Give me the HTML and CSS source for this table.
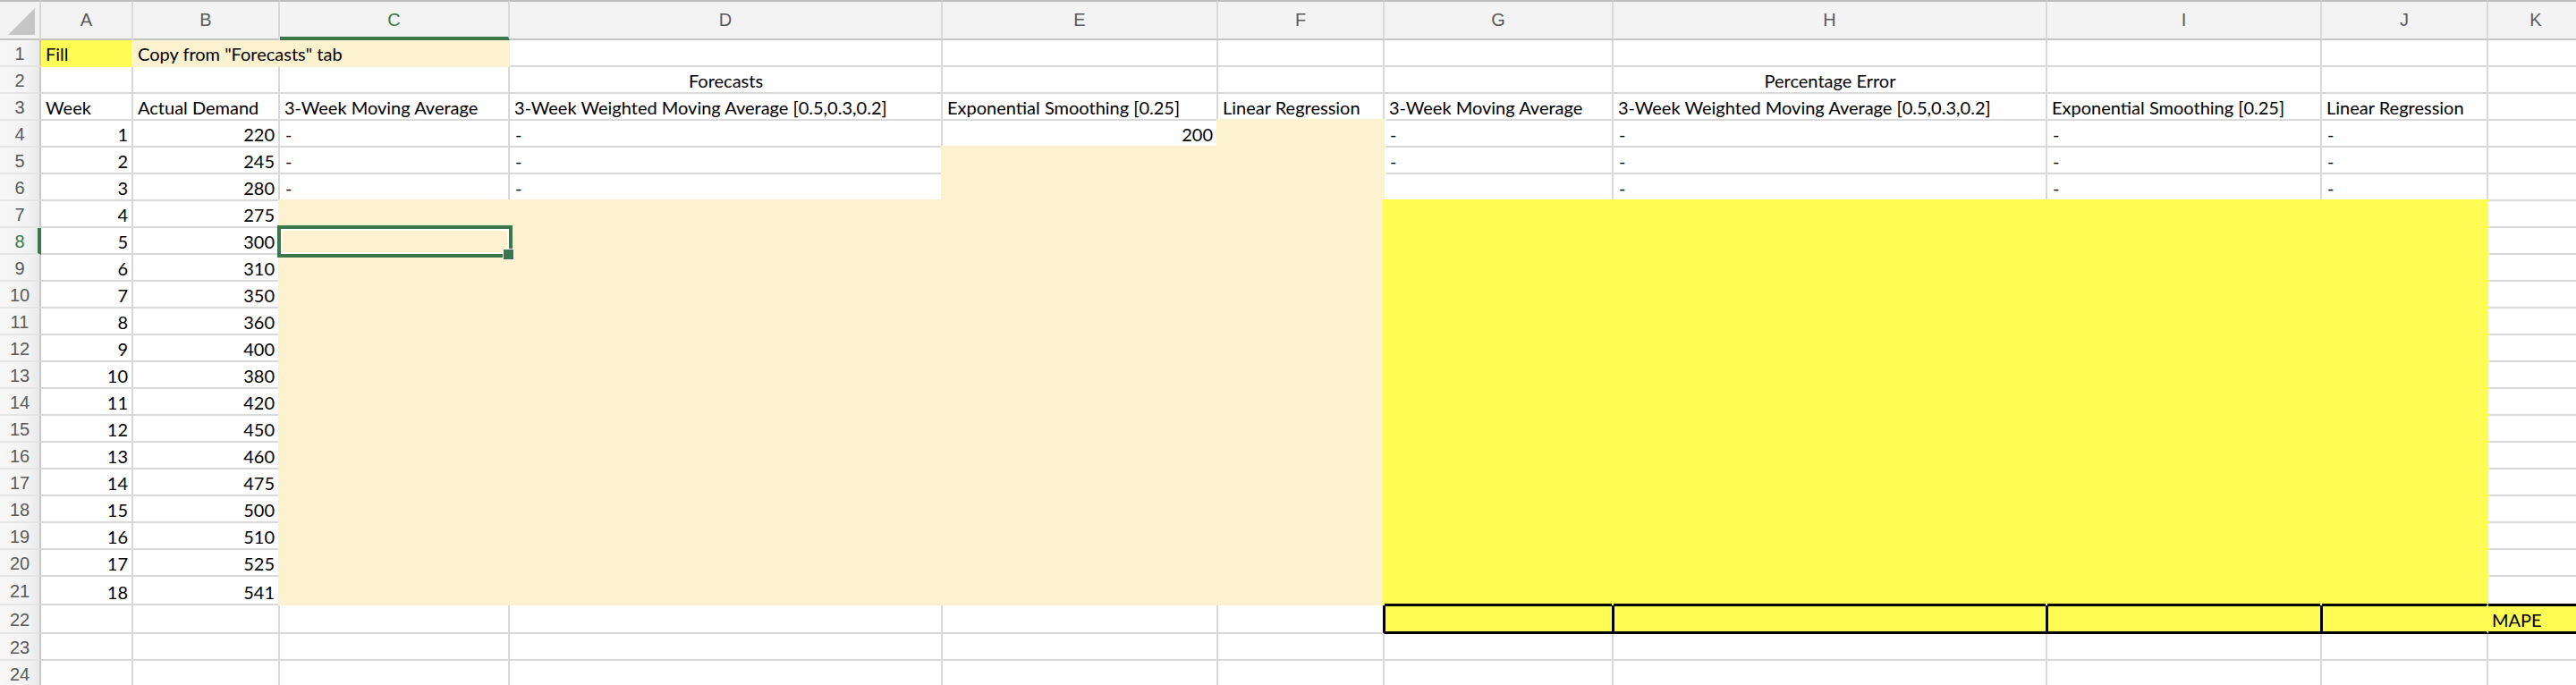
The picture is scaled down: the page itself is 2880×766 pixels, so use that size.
FILE: index.html
```html
<!DOCTYPE html>
<html>
<head>
<meta charset="utf-8">
<link rel="stylesheet" href="styles.css">
</head>
<body>
<div class="sheet">
  <div class="corner"><div class="tri"></div></div>
  <div class="colheads">
    <div class="ch">A</div><div class="ch">B</div><div class="ch sel">C</div><div class="ch">D</div><div class="ch">E</div><div class="ch">F</div><div class="ch">G</div><div class="ch">H</div><div class="ch">I</div><div class="ch">J</div><div class="ch">K</div>
  </div>
  <div class="rowheads">
    <div class="rh">1</div><div class="rh">2</div><div class="rh">3</div><div class="rh">4</div><div class="rh">5</div><div class="rh">6</div><div class="rh">7</div><div class="rh sel">8</div><div class="rh">9</div><div class="rh">10</div><div class="rh">11</div><div class="rh">12</div><div class="rh">13</div><div class="rh">14</div><div class="rh">15</div><div class="rh">16</div><div class="rh">17</div><div class="rh">18</div><div class="rh">19</div><div class="rh">20</div><div class="rh">21</div><div class="rh">22</div><div class="rh">23</div><div class="rh">24</div>
  </div>
  <div class="cells">
    <!-- row 1 -->
    <div class="c y">Fill</div><div class="c cr span2">Copy from "Forecasts" tab</div><div class="c"></div><div class="c"></div><div class="c"></div><div class="c"></div><div class="c"></div><div class="c"></div><div class="c"></div><div class="c"></div>
    <!-- row 2 -->
    <div class="c"></div><div class="c"></div><div class="c"></div><div class="c ctr">Forecasts</div><div class="c"></div><div class="c"></div><div class="c"></div><div class="c ctr">Percentage Error</div><div class="c"></div><div class="c"></div><div class="c"></div>
    <!-- row 3 -->
    <div class="c">Week</div><div class="c">Actual Demand</div><div class="c">3-Week Moving Average</div><div class="c">3-Week Weighted Moving Average [0.5,0.3,0.2]</div><div class="c">Exponential Smoothing [0.25]</div><div class="c">Linear Regression</div><div class="c">3-Week Moving Average</div><div class="c">3-Week Weighted Moving Average [0.5,0.3,0.2]</div><div class="c">Exponential Smoothing [0.25]</div><div class="c">Linear Regression</div><div class="c"></div>
    <!-- row 4 -->
    <div class="c r">1</div><div class="c r">220</div><div class="c dash">-</div><div class="c dash">-</div><div class="c r">200</div><div class="c cr"></div><div class="c dash">-</div><div class="c dash">-</div><div class="c dash">-</div><div class="c dash">-</div><div class="c"></div>
    <!-- row 5 -->
    <div class="c r">2</div><div class="c r">245</div><div class="c dash">-</div><div class="c dash">-</div><div class="c cr"></div><div class="c cr"></div><div class="c dash">-</div><div class="c dash">-</div><div class="c dash">-</div><div class="c dash">-</div><div class="c"></div>
    <!-- row 6 -->
    <div class="c r">3</div><div class="c r">280</div><div class="c dash">-</div><div class="c dash">-</div><div class="c cr"></div><div class="c cr"></div><div class="c"></div><div class="c dash">-</div><div class="c dash">-</div><div class="c dash">-</div><div class="c"></div>
    <!-- rows 7-20 -->
    <div class="c r">4</div><div class="c r">275</div><div class="c cr"></div><div class="c cr"></div><div class="c cr"></div><div class="c cr"></div><div class="c y"></div><div class="c y"></div><div class="c y"></div><div class="c y"></div><div class="c"></div>
    <div class="c r">5</div><div class="c r">300</div><div class="c cr"></div><div class="c cr"></div><div class="c cr"></div><div class="c cr"></div><div class="c y"></div><div class="c y"></div><div class="c y"></div><div class="c y"></div><div class="c"></div>
    <div class="c r">6</div><div class="c r">310</div><div class="c cr"></div><div class="c cr"></div><div class="c cr"></div><div class="c cr"></div><div class="c y"></div><div class="c y"></div><div class="c y"></div><div class="c y"></div><div class="c"></div>
    <div class="c r">7</div><div class="c r">350</div><div class="c cr"></div><div class="c cr"></div><div class="c cr"></div><div class="c cr"></div><div class="c y"></div><div class="c y"></div><div class="c y"></div><div class="c y"></div><div class="c"></div>
    <div class="c r">8</div><div class="c r">360</div><div class="c cr"></div><div class="c cr"></div><div class="c cr"></div><div class="c cr"></div><div class="c y"></div><div class="c y"></div><div class="c y"></div><div class="c y"></div><div class="c"></div>
    <div class="c r">9</div><div class="c r">400</div><div class="c cr"></div><div class="c cr"></div><div class="c cr"></div><div class="c cr"></div><div class="c y"></div><div class="c y"></div><div class="c y"></div><div class="c y"></div><div class="c"></div>
    <div class="c r">10</div><div class="c r">380</div><div class="c cr"></div><div class="c cr"></div><div class="c cr"></div><div class="c cr"></div><div class="c y"></div><div class="c y"></div><div class="c y"></div><div class="c y"></div><div class="c"></div>
    <div class="c r">11</div><div class="c r">420</div><div class="c cr"></div><div class="c cr"></div><div class="c cr"></div><div class="c cr"></div><div class="c y"></div><div class="c y"></div><div class="c y"></div><div class="c y"></div><div class="c"></div>
    <div class="c r">12</div><div class="c r">450</div><div class="c cr"></div><div class="c cr"></div><div class="c cr"></div><div class="c cr"></div><div class="c y"></div><div class="c y"></div><div class="c y"></div><div class="c y"></div><div class="c"></div>
    <div class="c r">13</div><div class="c r">460</div><div class="c cr"></div><div class="c cr"></div><div class="c cr"></div><div class="c cr"></div><div class="c y"></div><div class="c y"></div><div class="c y"></div><div class="c y"></div><div class="c"></div>
    <div class="c r">14</div><div class="c r">475</div><div class="c cr"></div><div class="c cr"></div><div class="c cr"></div><div class="c cr"></div><div class="c y"></div><div class="c y"></div><div class="c y"></div><div class="c y"></div><div class="c"></div>
    <div class="c r">15</div><div class="c r">500</div><div class="c cr"></div><div class="c cr"></div><div class="c cr"></div><div class="c cr"></div><div class="c y"></div><div class="c y"></div><div class="c y"></div><div class="c y"></div><div class="c"></div>
    <div class="c r">16</div><div class="c r">510</div><div class="c cr"></div><div class="c cr"></div><div class="c cr"></div><div class="c cr"></div><div class="c y"></div><div class="c y"></div><div class="c y"></div><div class="c y"></div><div class="c"></div>
    <div class="c r">17</div><div class="c r">525</div><div class="c cr"></div><div class="c cr"></div><div class="c cr"></div><div class="c cr"></div><div class="c y"></div><div class="c y"></div><div class="c y"></div><div class="c y"></div><div class="c"></div>
    <!-- row 21 -->
    <div class="c r">18</div><div class="c r">541</div><div class="c cr"></div><div class="c cr"></div><div class="c cr"></div><div class="c cr"></div><div class="c y above"></div><div class="c y above"></div><div class="c y above"></div><div class="c y above"></div><div class="c above"></div>
    <!-- row 22 -->
    <div class="c"></div><div class="c"></div><div class="c"></div><div class="c"></div><div class="c"></div><div class="c boxl"></div><div class="c yb box sep"></div><div class="c yb box sep"></div><div class="c yb box sep"></div><div class="c yb box"></div><div class="c yb boxk">MAPE</div>
    <!-- row 23 -->
    <div class="c"></div><div class="c"></div><div class="c"></div><div class="c"></div><div class="c"></div><div class="c"></div><div class="c"></div><div class="c"></div><div class="c"></div><div class="c"></div><div class="c"></div>
    <!-- row 24 -->
    <div class="c"></div><div class="c"></div><div class="c"></div><div class="c"></div><div class="c"></div><div class="c"></div><div class="c"></div><div class="c"></div><div class="c"></div><div class="c"></div><div class="c"></div>

    <div class="selection"><div class="handle"></div></div>
  </div>
</div>
</body>
</html>
```
FILE: styles.css
```css
* { box-sizing: border-box; }
html, body { margin: 0; padding: 0; background: #fff; }
body { width: 2880px; height: 766px; overflow: hidden; }

.sheet {
  display: grid;
  grid-template-columns: 46px 2834px;
  grid-template-rows: 45px auto;
}

.corner {
  background: #f3f3f3;
  border-top: 2px solid #bdbdbd;
  border-right: 2px solid #d6d6d6;
  border-bottom: 2px solid #c4c4c4;
  overflow: hidden;
  padding: 7px 0 0 9px;
}
.tri {
  width: 0;
  height: 0;
  border-left: 30px solid transparent;
  border-bottom: 30px solid #c6c6c6;
}

.colheads {
  display: grid;
  grid-template-columns: 103px 164px 257px 484px 308px 186px 256px 485px 307px 186px 106px;
  overflow: hidden;
}
.ch {
  background: #f3f3f3;
  border-top: 2px solid #bdbdbd;
  border-right: 2px solid #dadada;
  border-bottom: 2px solid #c4c4c4;
  display: flex;
  align-items: center;
  justify-content: center;
  font-family: "Liberation Sans", Arial, sans-serif;
  font-size: 20px;
  color: #5a5a5a;
  padding-bottom: 1px;
}
.ch:last-child { border-right: 0; }
.ch.sel {
  color: #3a774a;
  border-bottom: 4px solid #3a774a;
  padding-top: 2px;
}

.rowheads {
  display: grid;
  grid-template-rows: repeat(20, 30px) 32px 32px 30px 30px;
}
.rh {
  background: linear-gradient(to right, #f7f7f7 0%, #f3f3f3 70%, #e9e9e9 100%);
  border-right: 2px solid #c8c8c8;
  border-bottom: 2px solid #e4e4e4;
  display: flex;
  align-items: center;
  justify-content: center;
  font-family: "Liberation Sans", Arial, sans-serif;
  font-size: 20px;
  color: #5a5a5a;
  padding-top: 3px;
}
.rh.sel {
  color: #3a774a;
  border-right: 4px solid #3a774a;
  padding-left: 2px;
}

.cells {
  position: relative;
  overflow: hidden;
  display: grid;
  grid-template-columns: 103px 164px 257px 484px 308px 186px 256px 485px 307px 186px 106px;
  grid-template-rows: repeat(20, 30px) 32px 32px 30px 30px;
}

.c {
  background: #fff;
  border-right: 2px solid #d9d9d9;
  border-bottom: 2px solid #d9d9d9;
  display: flex;
  align-items: flex-end;
  padding: 0 4px 3px 5px;
  font-family: Lato, "Liberation Sans", sans-serif;
  font-size: 20px;
  line-height: 20px;
  color: #000;
  white-space: nowrap;
  min-width: 0;
}
.c.r { justify-content: flex-end; }
.c.ctr { justify-content: center; }
.c.dash { padding-left: 6px; }
.span2 { grid-column: span 2; }

.c.y {
  background: #fffd54;
  border-color: #fffd54;
  box-shadow: 0 0 0 2px #fffd54;
}
.c.cr {
  background: #fcf2d0;
  border-color: #fcf2d0;
  box-shadow: 0 0 0 2px #fcf2d0;
}

/* MAPE box (row 22) */
.c.above { border-bottom: 2px solid #000; }
.c.boxl { border-right: 2px solid #000; }
.c.yb {
  background: #fffd54;
  border-bottom: 3px solid #000;
  border-right-color: #fffd54;
}
.c.box { box-shadow: inset 1px 1px 0 #000; }
.c.box.sep { border-right: 2px solid #000; }
.c.boxk { box-shadow: inset 0 1px 0 #000; padding-left: 4px; }

/* selection */
.selection {
  position: absolute;
  left: 264px;
  top: 207px;
  width: 263px;
  height: 36px;
  border: 4px solid #3a774a;
  box-shadow: inset 0 0 0 2px #fff;
}
.handle {
  position: absolute;
  right: -6px;
  bottom: -7px;
  width: 13px;
  height: 13px;
  background: #3a774a;
  border: 1px solid #fff;
}
```
